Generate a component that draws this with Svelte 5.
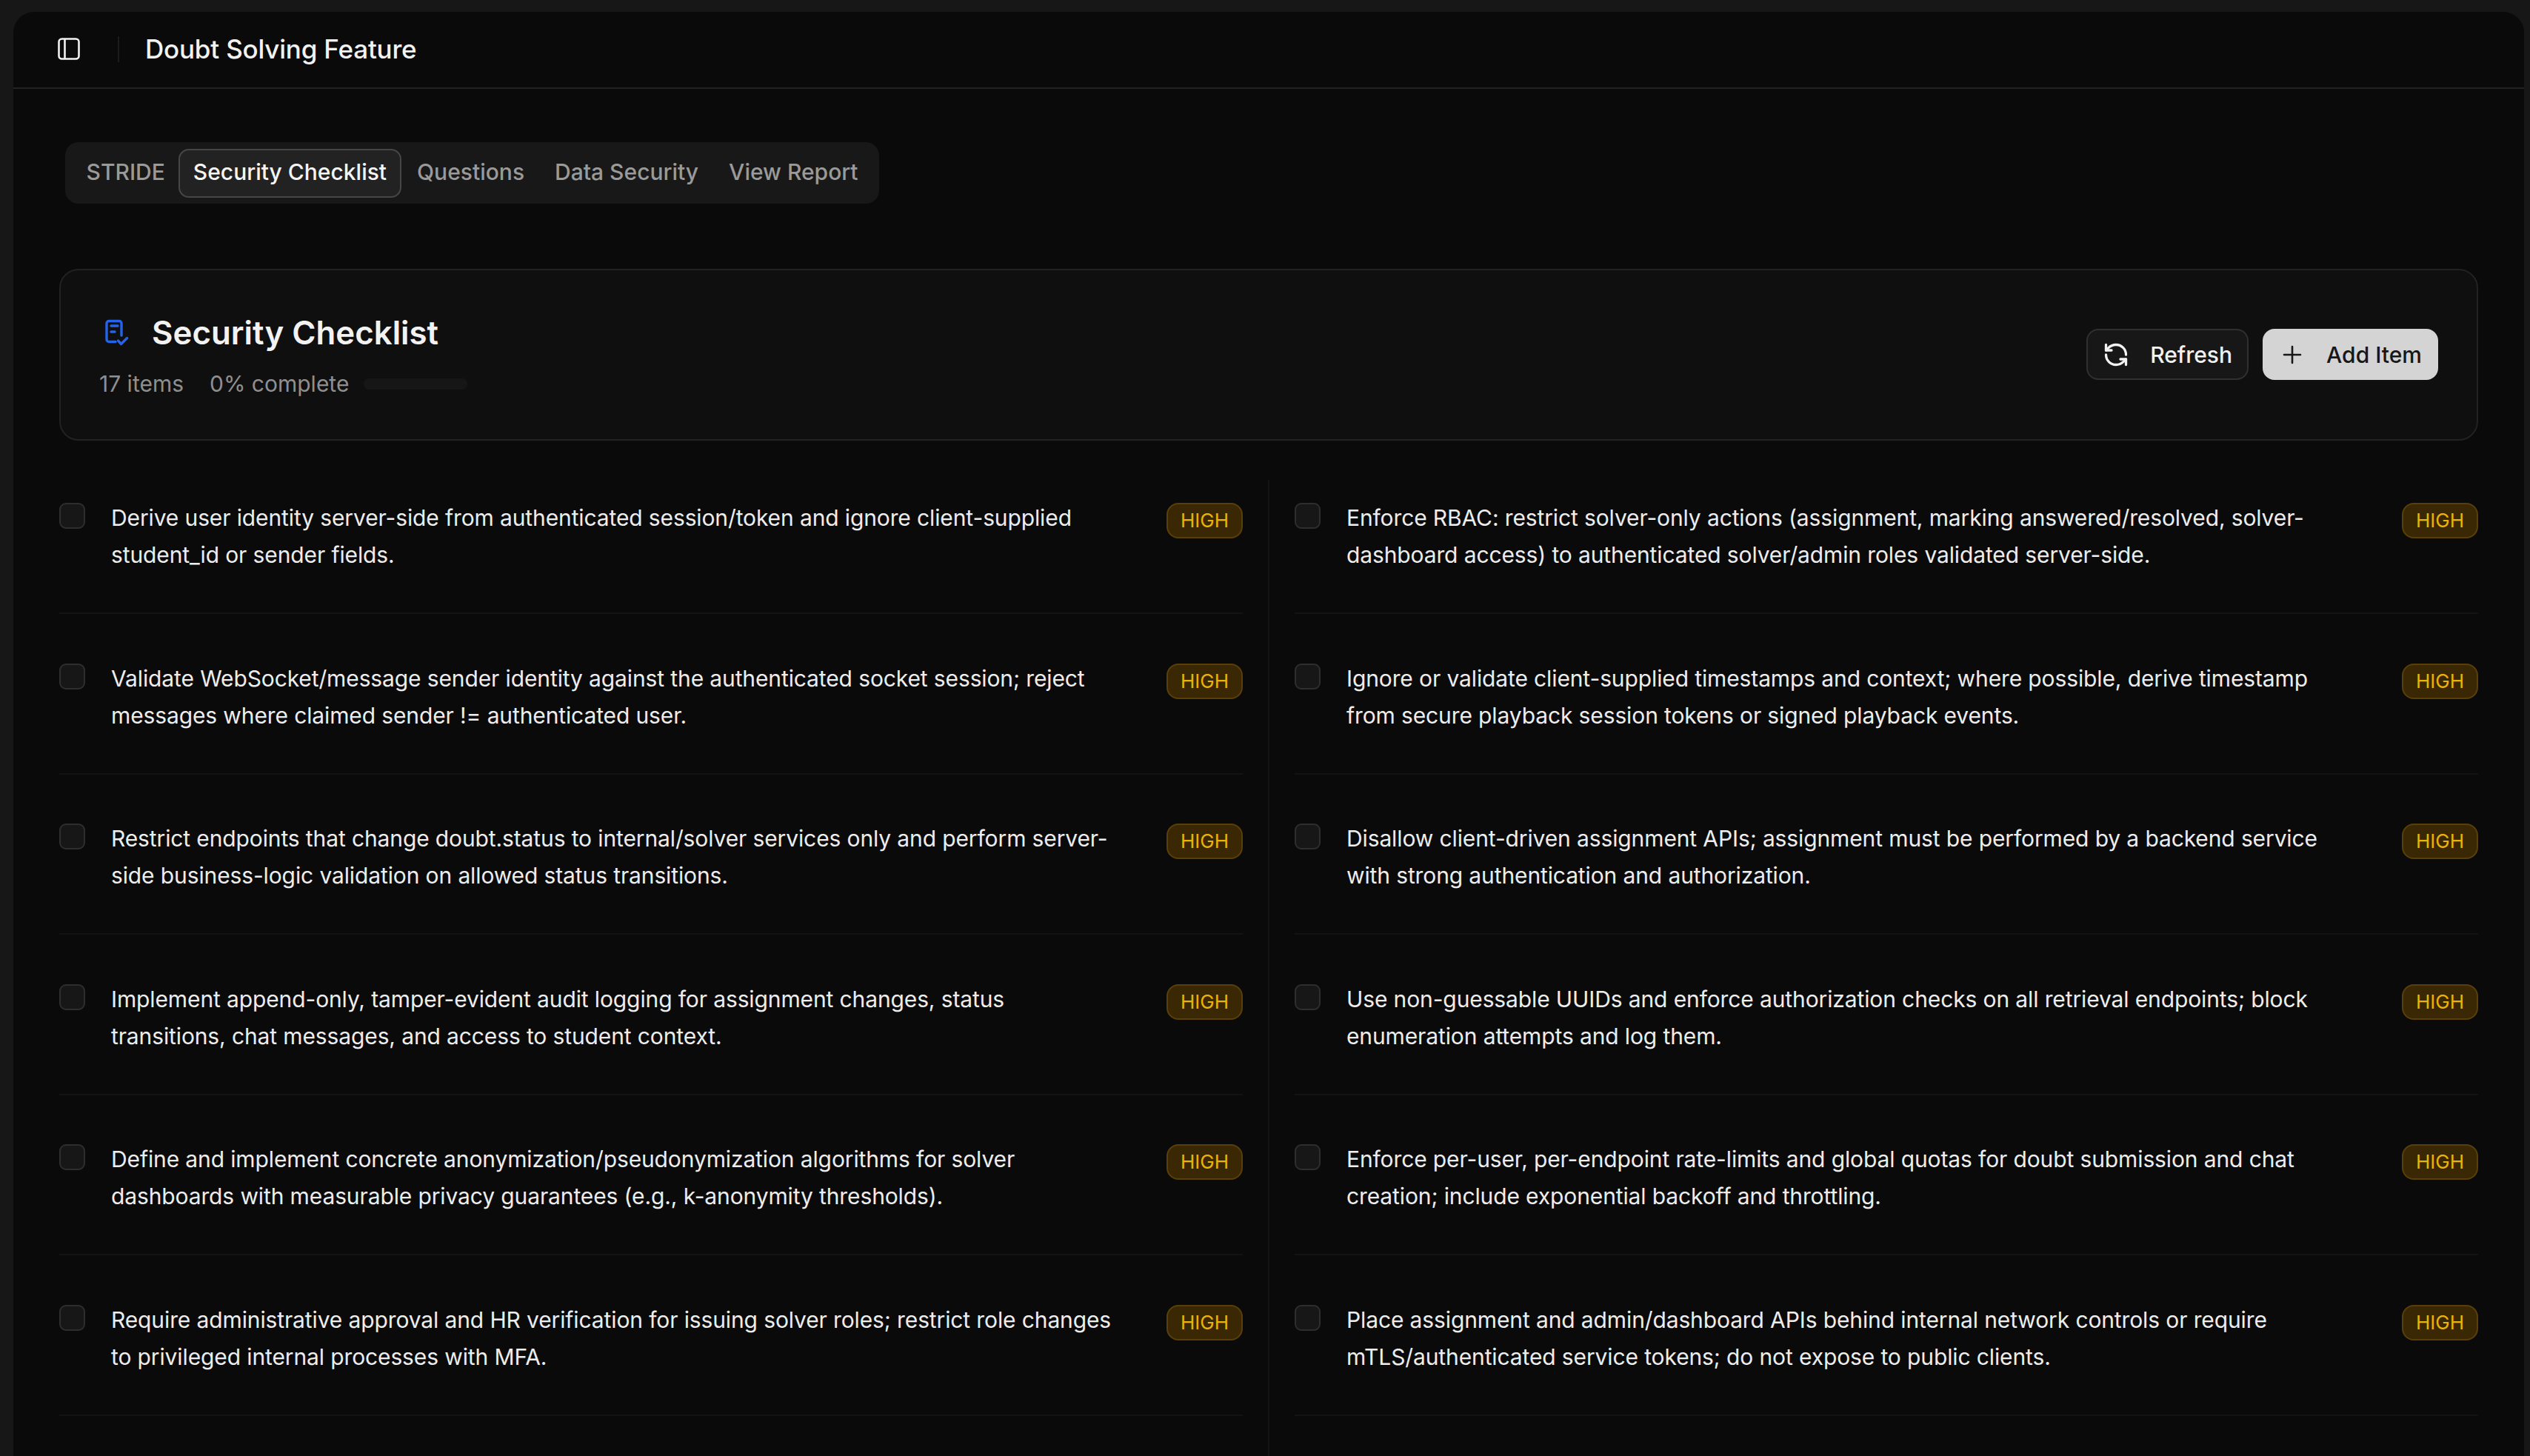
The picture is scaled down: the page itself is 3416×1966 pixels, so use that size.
<script>
    const tabs = ['STRIDE', 'Security Checklist', 'Questions', 'Data Security', 'View Report'];

    const leftItems = [
        'Derive user identity server-side from authenticated session/token and ignore client-supplied student_id or sender fields.',
        'Validate WebSocket/message sender identity against the authenticated socket session; reject messages where claimed sender != authenticated user.',
        'Restrict endpoints that change doubt.status to internal/solver services only and perform server-side business-logic validation on allowed status transitions.',
        'Implement append-only, tamper-evident audit logging for assignment changes, status transitions, chat messages, and access to student context.',
        'Define and implement concrete anonymization/pseudonymization algorithms for solver dashboards with measurable privacy guarantees (e.g., k-anonymity thresholds).',
        'Require administrative approval and HR verification for issuing solver roles; restrict role changes to privileged internal processes with MFA.',
    ];

    const rightItems = [
        'Enforce RBAC: restrict solver-only actions (assignment, marking answered/resolved, solver-dashboard access) to authenticated solver/admin roles validated server-side.',
        'Ignore or validate client-supplied timestamps and context; where possible, derive timestamp from secure playback session tokens or signed playback events.',
        'Disallow client-driven assignment APIs; assignment must be performed by a backend service with strong authentication and authorization.',
        'Use non-guessable UUIDs and enforce authorization checks on all retrieval endpoints; block enumeration attempts and log them.',
        'Enforce per-user, per-endpoint rate-limits and global quotas for doubt submission and chat creation; include exponential backoff and throttling.',
        'Place assignment and admin/dashboard APIs behind internal network controls or require mTLS/authenticated service tokens; do not expose to public clients.',
    ];

    const columns = [leftItems, rightItems];
</script>

<div class="panel">
    <header class="topbar">
        <svg class="sidebar-icon" viewBox="0 0 30 30" fill="none" stroke="#f2f2f2" stroke-width="2.6">
            <rect x="1.5" y="1.5" width="27" height="27" rx="4" />
            <path d="M9.500 1.500v27" />
        </svg>
        <span class="topbar-divider"></span>
        <h1>Doubt Solving Feature</h1>
    </header>

    <main class="content">
        <nav class="tabs">
            {#each tabs as tab, i}
                <button class="tab" class:active={i === 1}>{tab}</button>
            {/each}
        </nav>

        <section class="card">
            <div>
                <div class="card-title">
                    <svg class="doc-icon" viewBox="0 0 44 44" fill="none" stroke="#2563eb" stroke-width="3.4" stroke-linecap="round" stroke-linejoin="round">
                        <path d="M18 34.500H9a3 3 0 0 1-3-3V9.500a3 3 0 0 1 3-3h14a3 3 0 0 1 3 3V26" />
                        <path d="M12 13h9M12 21h5" />
                        <path d="M21.500 33l4 4.500 8-8" />
                    </svg>
                    <h2>Security Checklist</h2>
                </div>
                <div class="stats">
                    <span>17 items</span>
                    <span class="complete">0% complete</span>
                    <span class="progress"></span>
                </div>
            </div>
            <div class="actions">
                <button class="btn">
                    <svg class="btn-icon" viewBox="0 0 24 24" fill="none" stroke="currentColor" stroke-width="2.2" stroke-linecap="round" stroke-linejoin="round">
                        <path d="M21 12a9 9 0 0 0-9-9 9.750 9.750 0 0 0-6.740 2.740L3 8" />
                        <path d="M3 3v5h5" />
                        <path d="M3 12a9 9 0 0 0 9 9 9.750 9.750 0 0 0 6.740-2.740L21 16" />
                        <path d="M16 16h5v5" />
                    </svg>
                    Refresh
                </button>
                <button class="btn primary">
                    <svg class="btn-icon" viewBox="0 0 36 36" fill="none" stroke="currentColor" stroke-width="2.6" stroke-linecap="round">
                        <path d="M18 7v22M7 18h22" />
                    </svg>
                    Add Item
                </button>
            </div>
        </section>

        <div class="checklist">
            {#each columns as items}
                <div class="column">
                    {#each items as item}
                        <div class="item">
                            <span class="checkbox"></span>
                            <p>{item}</p>
                            <span class="badge">HIGH</span>
                        </div>
                    {/each}
                </div>
            {/each}
        </div>
    </main>
</div>

<style>
    :global(body) {
        background: #171717;
        overflow: hidden;
    }

    .panel {
        height: calc(100vh - 16px);
        margin: 16px 8px 0 18px;
        border-radius: 28px 28px 0 0;
        background: #0a0a0a;
        color: #f2f2f2;
        font-family: Inter, "Liberation Sans", sans-serif;
        display: flex;
        flex-direction: column;
        overflow: hidden;
    }

    .topbar {
        display: flex;
        align-items: center;
        height: 104px;
        flex: none;
        padding: 0 0 2px 60px;
        box-sizing: border-box;
        border-bottom: 2px solid #222;
    }

    .sidebar-icon {
        width: 30px;
        height: 30px;
    }

    .topbar-divider {
        width: 2px;
        height: 35px;
        margin: 0 35px 0 51px;
        background: #1c1c1c;
    }

    h1 {
        margin: 0;
        font-size: 35px;
        font-weight: 500;
        letter-spacing: -0.2px;
    }

    .content {
        flex: 1;
        min-height: 0;
        display: flex;
        flex-direction: column;
        padding: 72px 62px 0;
    }

    .tabs {
        align-self: flex-start;
        display: flex;
        align-items: center;
        gap: 2px;
        height: 83px;
        box-sizing: border-box;
        margin-left: 8px;
        padding: 0 9px;
        border-radius: 18px;
        background: #181818;
    }

    .tab {
        height: 66px;
        padding: 0 17.500px 3px;
        border: 2px solid transparent;
        border-radius: 14px;
        background: none;
        color: #9a9a9a;
        font: 500 30px Inter, "Liberation Sans", sans-serif;
    }

    .tab:first-child {
        margin-right: -3px;
    }

    .tab.active {
        border-color: #464646;
        background: #222;
        color: #f5f5f5;
    }

    .card {
        display: flex;
        justify-content: space-between;
        align-items: center;
        height: 232px;
        box-sizing: border-box;
        margin-top: 88px;
        padding: 56px 52px 50px;
        border: 2px solid #222;
        border-radius: 26px;
        background: #0f0f0f;
    }

    .card-title {
        display: flex;
        align-items: center;
        height: 56px;
    }

    .doc-icon {
        width: 44px;
        height: 44px;
        margin: 0 23px 0 4px;
    }

    h2 {
        margin: 0;
        font-size: 43.800px;
        font-weight: 600;
    }

    .stats {
        display: flex;
        align-items: center;
        height: 50px;
        margin-top: 16px;
        color: #8f8f8f;
        font-size: 30px;
    }

    .complete {
        margin-left: 35px;
    }

    .progress {
        width: 140px;
        height: 15px;
        margin-left: 20px;
        border-radius: 7px;
        background: #161616;
    }

    .actions {
        display: flex;
        gap: 19px;
        margin-bottom: 7px;
    }

    .btn {
        display: flex;
        align-items: center;
        gap: 28px;
        height: 69px;
        padding: 0 20px;
        box-sizing: border-box;
        border: 2px solid #303030;
        border-radius: 16px;
        background: #171717;
        color: #f2f2f2;
        font: 500 30px Inter, "Liberation Sans", sans-serif;
    }

    .btn.primary {
        border-color: #d4d4d4;
        background: #d4d4d4;
        color: #171717;
    }

    .btn-icon {
        width: 36px;
        height: 36px;
    }

    .checklist {
        flex: 1;
        min-height: 0;
        display: grid;
        grid-template-columns: 1634px 1632px;
        margin-top: 53px;
    }

    .column {
        display: flex;
        flex-direction: column;
        gap: 35.600px;
    }

    .column:first-child {
        padding-right: 34px;
        border-right: 2px solid #141414;
    }

    .column:last-child {
        padding-left: 34px;
    }

    .item {
        display: flex;
        align-items: flex-start;
        height: 181px;
        box-sizing: border-box;
        padding-top: 31px;
        border-bottom: 2px solid #131313;
    }

    .checkbox {
        flex: none;
        width: 35px;
        height: 35px;
        box-sizing: border-box;
        border: 2px solid #2e2e2e;
        border-radius: 9px;
        background: #171717;
    }

    p {
        width: 1355px;
        margin: -5px 0 0 35px;
        color: #ededed;
        font-size: 30px;
        line-height: 50px;
        letter-spacing: -0.12px;
    }

    .badge {
        margin-left: auto;
        flex: none;
        width: 103px;
        height: 48px;
        box-sizing: border-box;
        border: 2px solid #5a4008;
        border-radius: 16px;
        background: #3a2805;
        color: #eab308;
        font-size: 26px;
        line-height: 44px;
        text-align: center;
    }
</style>
